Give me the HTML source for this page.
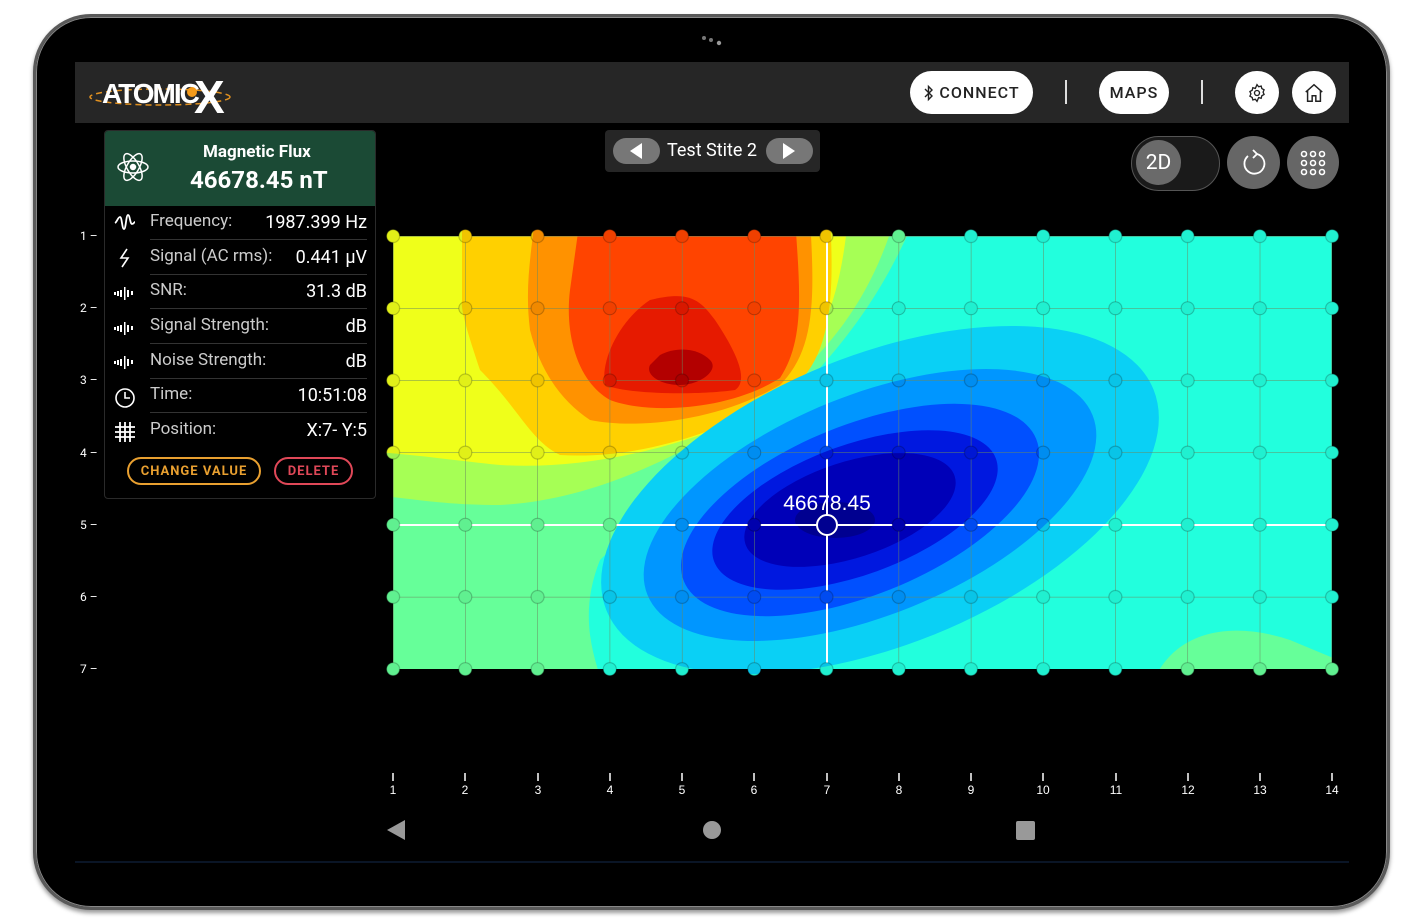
<!DOCTYPE html>
<html><head><meta charset="utf-8"><style>
*{margin:0;padding:0;box-sizing:border-box}
body{width:1424px;height:924px;background:#fff;position:relative;overflow:hidden;font-family:"Roboto","Liberation Sans",sans-serif;color:#fff}
.abs{position:absolute}
.dev{left:33px;top:14px;width:1357px;height:896px;border-radius:58px;background:#000;border:3px solid #5a5a5a;box-shadow:0 0 0 1px #888 inset,0 3px 4px #999}
.top{left:75px;top:62px;width:1274px;height:61px;background:#262626}
.pill{background:#fff;color:#222;border-radius:22px;height:43px;top:71px;font-size:16px;letter-spacing:1px;display:flex;align-items:center;justify-content:center;font-weight:500}
.panel{left:104px;top:130px;width:272px;height:369px;border:1px solid #2a2a2a;border-radius:4px;background:#000;overflow:hidden}
.hdr{height:75px;background:#1b4a35;position:relative}
.row{position:absolute;left:45px;right:8px;height:34px;border-bottom:1px solid #333;font-size:17px}
.row .l{position:absolute;left:0;top:5px;color:#ccc}
.row .r{position:absolute;right:0;top:6px;color:#fff;font-size:18px}
.ic{position:absolute;left:8px;width:24px;height:24px}
.btn{position:absolute;top:326px;height:28px;border-radius:14px;font-size:13px;font-weight:700;letter-spacing:1px;display:flex;align-items:center;justify-content:center}
.yl{font-size:12px;left:80px}
</style></head><body>
<div class="abs dev"></div>
<svg class="abs" style="left:700px;top:34px" width="24" height="14"><circle cx="4" cy="4" r="2" fill="#777"/><circle cx="11" cy="6" r="2" fill="#777"/><circle cx="19" cy="9" r="2.2" fill="#999"/></svg>
<div class="abs top"></div>
<!-- logo -->
<svg class="abs" style="left:85px;top:68px" width="150" height="48">
<ellipse cx="75" cy="29" rx="70" ry="8" fill="none" stroke="#e09020" stroke-width="1.5" stroke-dasharray="6 4"/>
<text x="17" y="35" font-family="Liberation Sans" font-weight="bold" font-size="28" fill="#fff" letter-spacing="-2">ATOMIC</text>
<circle cx="107" cy="24" r="5" fill="#f49a1a"/>
<text x="109" y="45" font-family="Liberation Sans" font-weight="bold" font-size="46" fill="#fff">X</text>
</svg>
<div class="abs pill" style="left:910px;width:123px">
<svg width="12" height="18" viewBox="0 0 12 18" style="margin-right:4px"><path d="M2 5l7 7-3.5 3.5V2.5L9 6 2 13" fill="none" stroke="#222" stroke-width="1.4"/></svg>CONNECT</div>
<div class="abs" style="left:1065px;top:80px;width:2px;height:24px;background:#ddd"></div>
<div class="abs pill" style="left:1099px;width:70px">MAPS</div>
<div class="abs" style="left:1201px;top:80px;width:2px;height:24px;background:#ddd"></div>
<div class="abs pill" style="left:1235px;width:44px">
<svg width="20" height="20" viewBox="0 0 24 24" fill="none" stroke="#222" stroke-width="1.6"><circle cx="12" cy="12" r="3"/><path d="M12 2l2 2.5 3-.8.8 3 2.7 1.5-1.2 2.8 1.2 2.8-2.7 1.5-.8 3-3-.8L12 22l-2-2.5-3 .8-.8-3L3.5 15.8l1.2-2.8-1.2-2.8L6.2 8.7l.8-3 3 .8z"/></svg></div>
<div class="abs pill" style="left:1292px;width:44px">
<svg width="22" height="22" viewBox="0 0 24 24" fill="none" stroke="#222" stroke-width="1.6"><path d="M3 11l9-8 9 8M5 9.5V21h5v-6h4v6h5V9.5"/></svg></div>

<!-- site selector -->
<div class="abs" style="left:605px;top:130px;width:215px;height:42px;background:#262626;border-radius:4px"></div>
<div class="abs" style="left:613px;top:138px;width:47px;height:26px;background:#777;border-radius:13px"></div>
<svg class="abs" style="left:628px;top:142px" width="16" height="18"><path d="M14 1L2 9l12 8z" fill="#fff"/></svg>
<div class="abs" style="left:667px;top:140px;font-size:18px">Test Stite 2</div>
<div class="abs" style="left:766px;top:138px;width:47px;height:26px;background:#777;border-radius:13px"></div>
<svg class="abs" style="left:781px;top:142px" width="16" height="18"><path d="M2 1l12 8-12 8z" fill="#fff"/></svg>

<!-- right controls -->
<div class="abs" style="left:1131px;top:136px;width:89px;height:55px;border-radius:28px;background:#1a1a1a;border:1px solid #555"></div>
<div class="abs" style="left:1136px;top:140px;width:45px;height:45px;border-radius:50%;background:#6a6a6a;font-size:21px;display:flex;align-items:center;justify-content:center">2D</div>
<div class="abs" style="left:1227px;top:136px;width:53px;height:53px;border-radius:50%;background:#666"></div>
<svg class="abs" style="left:1240px;top:148px" width="28" height="30" viewBox="0 0 28 30" fill="none" stroke="#fff" stroke-width="1.8"><path d="M17 6A10 10 0 1 1 8 8"/><path d="M13 2l4 4-4 4"/></svg>
<div class="abs" style="left:1287px;top:136px;width:52px;height:53px;border-radius:50%;background:#666"></div>
<svg class="abs" style="left:1299px;top:149px" width="28" height="28" fill="none" stroke="#fff" stroke-width="1.6">
<circle cx="5" cy="5" r="2.5"/><circle cx="14" cy="5" r="2.5"/><circle cx="23" cy="5" r="2.5"/>
<circle cx="5" cy="14" r="2.5"/><circle cx="14" cy="14" r="2.5"/><circle cx="23" cy="14" r="2.5"/>
<circle cx="5" cy="23" r="2.5"/><circle cx="14" cy="23" r="2.5"/><circle cx="23" cy="23" r="2.5"/></svg>

<!-- panel -->
<div class="abs panel">
<div class="hdr">
<svg style="position:absolute;left:11px;top:19px" width="34" height="34" viewBox="0 0 34 34" fill="none" stroke="#fff" stroke-width="1.5"><ellipse cx="17" cy="17" rx="15" ry="6"/><ellipse cx="17" cy="17" rx="15" ry="6" transform="rotate(60 17 17)"/><ellipse cx="17" cy="17" rx="15" ry="6" transform="rotate(-60 17 17)"/><circle cx="17" cy="17" r="2.5" fill="#fff"/></svg>
<div style="position:absolute;left:98px;top:11px;font-size:17px;font-weight:700">Magnetic Flux</div>
<div style="position:absolute;left:85px;top:35px;font-size:24px;font-weight:700">46678.45 nT</div>
</div>
<div class="row" style="top:75px"><span class="l">Frequency:</span><span class="r">1987.399 Hz</span></div>
<div class="row" style="top:110px"><span class="l">Signal (AC rms):</span><span class="r">0.441 μV</span></div>
<div class="row" style="top:144px"><span class="l">SNR:</span><span class="r">31.3 dB</span></div>
<div class="row" style="top:179px"><span class="l">Signal Strength:</span><span class="r">dB</span></div>
<div class="row" style="top:214px"><span class="l">Noise Strength:</span><span class="r">dB</span></div>
<div class="row" style="top:248px"><span class="l">Time:</span><span class="r">10:51:08</span></div>
<div class="row" style="top:283px;border:none"><span class="l">Position:</span><span class="r">X:7- Y:5</span></div>
<svg class="ic" style="top:79px" viewBox="0 0 24 24" fill="none" stroke="#fff" stroke-width="1.8"><path d="M2 13c2-1 3-6 5-6s2 12 4 12 2-14 4-14 2 9 4 9 2-2 3-2"/></svg>
<svg class="ic" style="top:115px" viewBox="0 0 24 24" fill="none" stroke="#fff" stroke-width="1.6"><path d="M14 3l-6 9h7l-6 9"/></svg>
<svg class="ic" style="top:150px" viewBox="0 0 24 24" fill="#fff"><rect x="1" y="11" width="2" height="3"/><rect x="4" y="10" width="2" height="5"/><rect x="7" y="9" width="2" height="7"/><rect x="11" y="6" width="1.5" height="13"/><rect x="14" y="9" width="2" height="7"/><rect x="18" y="10" width="2" height="4"/></svg>
<svg class="ic" style="top:185px" viewBox="0 0 24 24" fill="#fff"><rect x="1" y="11" width="2" height="3"/><rect x="4" y="10" width="2" height="5"/><rect x="7" y="9" width="2" height="7"/><rect x="11" y="6" width="1.5" height="13"/><rect x="14" y="9" width="2" height="7"/><rect x="18" y="10" width="2" height="4"/></svg>
<svg class="ic" style="top:219px" viewBox="0 0 24 24" fill="#fff"><rect x="1" y="11" width="2" height="3"/><rect x="4" y="10" width="2" height="5"/><rect x="7" y="9" width="2" height="7"/><rect x="11" y="6" width="1.5" height="13"/><rect x="14" y="9" width="2" height="7"/><rect x="18" y="10" width="2" height="4"/></svg>
<svg class="ic" style="top:254px" viewBox="0 0 24 24" fill="none" stroke="#fff" stroke-width="1.6"><circle cx="12" cy="13" r="9"/><path d="M12 7v6h5"/></svg>
<svg class="ic" style="top:289px" viewBox="0 0 24 24" fill="none" stroke="#fff" stroke-width="1.8"><path d="M7 2v20M12 2v20M17 2v20M2 7h20M2 12h20M2 17h20"/></svg>
<div class="btn" style="left:22px;width:134px;border:2px solid #e9a030;color:#e9a030">CHANGE VALUE</div>
<div class="btn" style="left:169px;width:79px;border:2px solid #e04858;color:#e04858">DELETE</div>
</div>

<!-- y labels -->
<div class="abs yl" style="top:229px">1 –</div>
<div class="abs yl" style="top:301px">2 –</div>
<div class="abs yl" style="top:373px">3 –</div>
<div class="abs yl" style="top:446px">4 –</div>
<div class="abs yl" style="top:518px">5 –</div>
<div class="abs yl" style="top:590px">6 –</div>
<div class="abs yl" style="top:662px">7 –</div>

<!-- heatmap -->
<svg class="abs" style="left:0;top:0" width="1424" height="924">
<defs>
<clipPath id="c"><rect x="393" y="236" width="939" height="433"/></clipPath>
<pattern id="g" x="393" y="236" width="72.23" height="72.17" patternUnits="userSpaceOnUse"><path d="M0 0V72.17M0 0H72.23" stroke="#6a8a60" stroke-width="1" fill="none"/></pattern>
<pattern id="dm" x="357" y="200" width="72.23" height="72.17" patternUnits="userSpaceOnUse"><circle cx="36.1" cy="36.1" r="6.5" fill="#fff"/></pattern>
<pattern id="ds" x="357" y="200" width="72.23" height="72.17" patternUnits="userSpaceOnUse"><circle cx="36.1" cy="36.1" r="6.5" fill="#000" fill-opacity="0.06" stroke="#000" stroke-opacity="0.25" stroke-width="1"/></pattern>
<mask id="m"><rect x="357" y="200" width="1012" height="505" fill="url(#dm)"/></mask>
<g id="hm">
<rect x="375" y="218" width="975" height="469" fill="#22ffdd"/>
<path d="M1150 690C1170 630 1230 620 1290 640L1350 665V690Z" fill="#66ff99"/>
<path d="M375 218H915C880 300 840 350 780 410C700 470 640 520 600 560C580 610 590 650 605 690H375Z" fill="#66ff99"/>
<path d="M375 218H895C870 300 830 350 770 400C690 450 600 500 500 505C450 505 420 500 375 495Z" fill="#a6ff55"/>
<path d="M375 218H848C840 300 820 360 760 410C680 450 580 470 500 465C450 460 420 455 375 452Z" fill="#efff1a"/>
<path d="M462 218H830C835 300 830 360 790 390C730 430 640 460 560 455C530 440 520 410 480 370C470 340 460 310 462 300Z" fill="#ffd000"/>
<path d="M535 218H810C815 300 815 350 780 385C720 420 640 430 590 420C560 400 540 370 530 330C525 290 530 260 535 218Z" fill="#ff9200"/>
<path d="M580 218H795C800 290 805 340 780 378C730 410 650 415 610 400C575 380 565 330 570 290Z" fill="#ff4400"/>
<path d="M650 300C690 290 700 300 715 320C735 350 750 380 735 390C700 395 630 395 605 385C600 360 620 320 650 300Z" fill="#e61a00"/>
<path d="M660 355C680 345 700 350 710 360C720 370 700 385 680 385C660 385 645 375 650 365Z" fill="#b30000"/>
<ellipse cx="880" cy="500" rx="295" ry="145" transform="rotate(-22 880 500)" fill="#0ad0f5"/>
<ellipse cx="870" cy="505" rx="240" ry="110" transform="rotate(-22 870 505)" fill="#0096ff"/>
<ellipse cx="860" cy="510" rx="190" ry="85" transform="rotate(-22 860 510)" fill="#0050ff"/>
<ellipse cx="855" cy="510" rx="150" ry="65" transform="rotate(-20 855 510)" fill="#0018e0"/>
<ellipse cx="850" cy="510" rx="110" ry="48" transform="rotate(-18 850 510)" fill="#0000b8"/>
<ellipse cx="835" cy="520" rx="40" ry="18" fill="#000090"/>
</g>
</defs>
<g clip-path="url(#c)">
<use href="#hm"/>
<rect x="393" y="236" width="939" height="433" fill="url(#g)"/>
<path d="M393 236H1332V669" fill="none" stroke="#6a8a60"/>
<path d="M393 525H1332M827 236V669" stroke="#fff" stroke-width="2"/>
</g>
<use href="#hm" mask="url(#m)"/>
<rect x="357" y="200" width="1012" height="505" fill="url(#ds)"/>
<circle cx="827" cy="525" r="10" fill="#000090" stroke="#fff" stroke-width="2"/>
<text x="827" y="510" text-anchor="middle" font-family="Liberation Sans" font-size="21" fill="#fff">46678.45</text>
<g stroke="#fff" stroke-width="1.5">
<path d="M393 773v8M465 773v8M538 773v8M610 773v8M682 773v8M754 773v8M827 773v8M899 773v8M971 773v8M1043 773v8M1116 773v8M1188 773v8M1260 773v8M1332 773v8"/></g>
<g font-family="Liberation Sans" font-size="12" fill="#fff" text-anchor="middle">
<text x="393" y="794">1</text><text x="465" y="794">2</text><text x="538" y="794">3</text><text x="610" y="794">4</text><text x="682" y="794">5</text><text x="754" y="794">6</text><text x="827" y="794">7</text><text x="899" y="794">8</text><text x="971" y="794">9</text><text x="1043" y="794">10</text><text x="1116" y="794">11</text><text x="1188" y="794">12</text><text x="1260" y="794">13</text><text x="1332" y="794">14</text></g>
<path d="M405 820v20l-18-10z" fill="#999"/>
<circle cx="712" cy="830" r="9" fill="#999"/>
<rect x="1016" y="821" width="19" height="19" rx="2" fill="#999"/>
<path d="M75 862H1349" stroke="#0a1526" stroke-width="2"/>
</svg>
</body></html>
